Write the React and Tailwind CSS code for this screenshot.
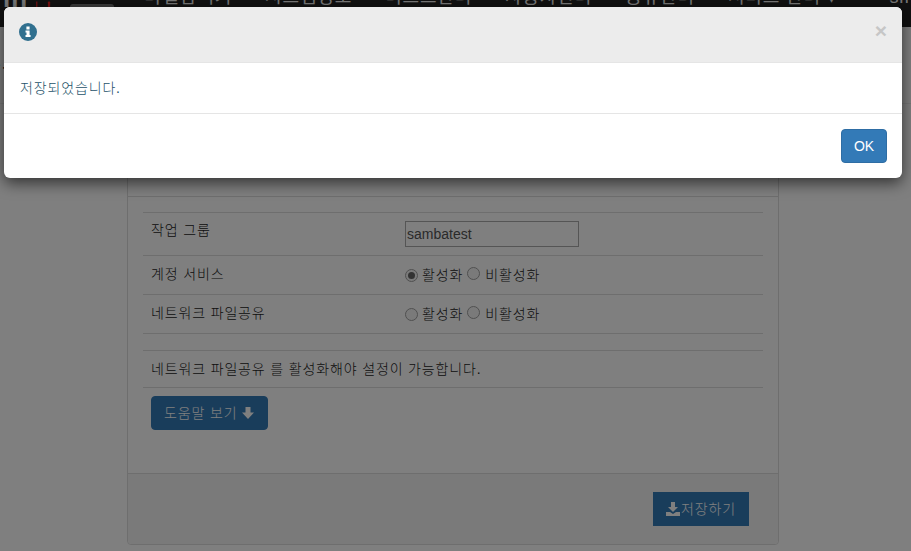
const ko = { fontFamily: '"Liberation Sans", "Noto Sans CJK KR", sans-serif' };

function Radio({ checked }) {
  return (
    <span className="inline-flex h-[13px] w-[13px] items-center justify-center rounded-full border border-[#a0a0a0] bg-[#f5f5f5]">
      {checked && <span className="h-[7px] w-[7px] rounded-full bg-[#666]" />}
    </span>
  );
}

function RadioPair({ first }) {
  return (
    <div className="flex items-center pt-[1px]">
      <Radio checked={first} />
      <span className="ml-[4px]">활성화</span>
      <span className="ml-[4px]"><Radio /></span>
      <span className="ml-[5px]">비활성화</span>
    </div>
  );
}

function Row({ label, children, className }) {
  return (
    <div className={`flex border-b border-[#ddd] pl-[8px] ${className}`}>
      <div className="w-[254px]">{label}</div>
      <div>{children}</div>
    </div>
  );
}

export default function App() {
  return (
    <div className="relative h-[551px] w-[911px] overflow-hidden bg-white text-[14px] font-light leading-[20px] tracking-[0.85px] text-[#222]" style={ko}>
      <nav className="flex h-[27px] items-end overflow-hidden bg-[#222] pb-[18px] text-[18px] font-normal leading-[24px] text-[#eee]">
        <div className="mb-[-1px] ml-[3px] flex h-[24px] w-[48px] shrink-0 items-end whitespace-nowrap">
          <span className="text-[26px] font-bold leading-[24px] tracking-[1px]">in</span>
          <svg className="mb-[-2px] ml-[8px]" width="20" height="12" viewBox="0 0 20 12">
            <rect x="0" y="0" width="2" height="12" fill="#c22" />
            <rect x="16" y="0" width="3" height="8" rx="1" fill="#e22" />
          </svg>
        </div>
        <div className="mb-[-5px] ml-[19px] h-[10px] w-[44px] shrink-0 rounded-t-[3px] bg-[#777]" />
        <div className="ml-[31px] flex shrink-0 gap-[33px] whitespace-nowrap">
          <span>파일탐색기</span>
          <span>시스템정보</span>
          <span>디스크관리</span>
          <span>사용자관리</span>
          <span>공유관리</span>
          <span>서비스 관리 ▾</span>
          <span className="ml-[20px]">sm</span>
        </div>
      </nav>

      <header className="h-[77px] border-b border-[#eee] pt-[26px] text-[24px] font-normal leading-[26px]">
        <span className="ml-[-21px]">공유</span>
      </header>

      <main className="ml-[127px] mt-[8px] w-[652px] rounded-[4px] border border-[#ddd] bg-white">
        <div className="h-[84px] border-b border-[#ddd]" />
        <div className="h-[276px] px-[15px] pt-[15px]">
          <div className="border-t border-[#ddd]">
            <Row label="작업 그룹" className="h-[43px] pt-[7px]">
              <input
                readOnly
                value="sambatest"
                className="mt-[1px] h-[26px] w-[174px] border border-[#aaa] bg-white px-[1px] text-[14px] font-normal tracking-normal text-[#555] outline-none"
                style={ko}
              />
            </Row>
            <Row label="계정 서비스" className="h-[39px] pt-[8px]">
              <RadioPair first />
            </Row>
            <Row label="네트워크 파일공유" className="h-[39px] pt-[8px]">
              <RadioPair />
            </Row>
          </div>
          <div className="mt-[16px] border-y border-[#ddd] p-[8px]">
            네트워크 파일공유 를 활성화해야 설정이 가능합니다.
          </div>
          <button className="ml-[8px] mt-[8px] flex h-[34px] w-[117px] items-center gap-[4px] rounded-[4px] border border-[#337ab7] bg-[#337ab7] pl-[12px] text-white">
            도움말 보기
            <svg width="14" height="14" viewBox="0 0 14 14" fill="currentColor">
              <path d="M4.500 1h5v5.500h3.500L7 13 1 6.500h3.500z" />
            </svg>
          </button>
        </div>
        <div className="flex h-[71px] justify-end rounded-b-[4px] border-t border-[#ddd] bg-[#f5f5f5] pr-[29px] pt-[18px]">
          <button className="flex h-[34px] w-[96px] items-center justify-center gap-[1px] bg-[#337ab7] text-white">
            <svg width="14" height="14" viewBox="0 0 14 14" fill="currentColor">
              <path d="M5 0h4v5h3L7 10 2 5h3zM0 10h4l3 2 3-2h4v4H0z" />
            </svg>
            저장하기
          </button>
        </div>
      </main>

      <div className="absolute inset-0 bg-black/50" />

      <div className="absolute left-[4px] top-[7px] h-[171px] w-[898px] overflow-hidden rounded-[6px] bg-white shadow-[0_5px_15px_rgba(0,0,0,0.6)]">
        <div className="flex h-[56px] items-start justify-between border-b border-[#e5e5e5] bg-[#ececec] pl-[15px] pr-[15px]">
          <svg className="mt-[16px]" width="18" height="18" viewBox="0 0 18 18">
            <circle cx="9" cy="9" r="9" fill="#31708f" />
            <rect x="7.400" y="3.500" width="3.200" height="3" fill="#fff" />
            <path d="M6.500 7.500h4.100v4.500h1v2H6.500v-2h1v-2.500h-1z" fill="#fff" />
          </svg>
          <span className="mt-[13px] text-[21px] font-bold leading-[21px] tracking-normal text-[#c6c6c6]" style={{ fontFamily: '"Liberation Sans", sans-serif' }}>×</span>
        </div>
        <div className="h-[51px] border-b border-[#e5e5e5] px-[16px] pt-[15px] text-[#245269]">저장되었습니다.</div>
        <div className="flex justify-end pr-[15px] pt-[15px]">
          <button className="h-[34px] w-[46px] rounded-[4px] border border-[#2e6da4] bg-[#337ab7] font-normal tracking-normal text-white">OK</button>
        </div>
      </div>
    </div>
  );
}
